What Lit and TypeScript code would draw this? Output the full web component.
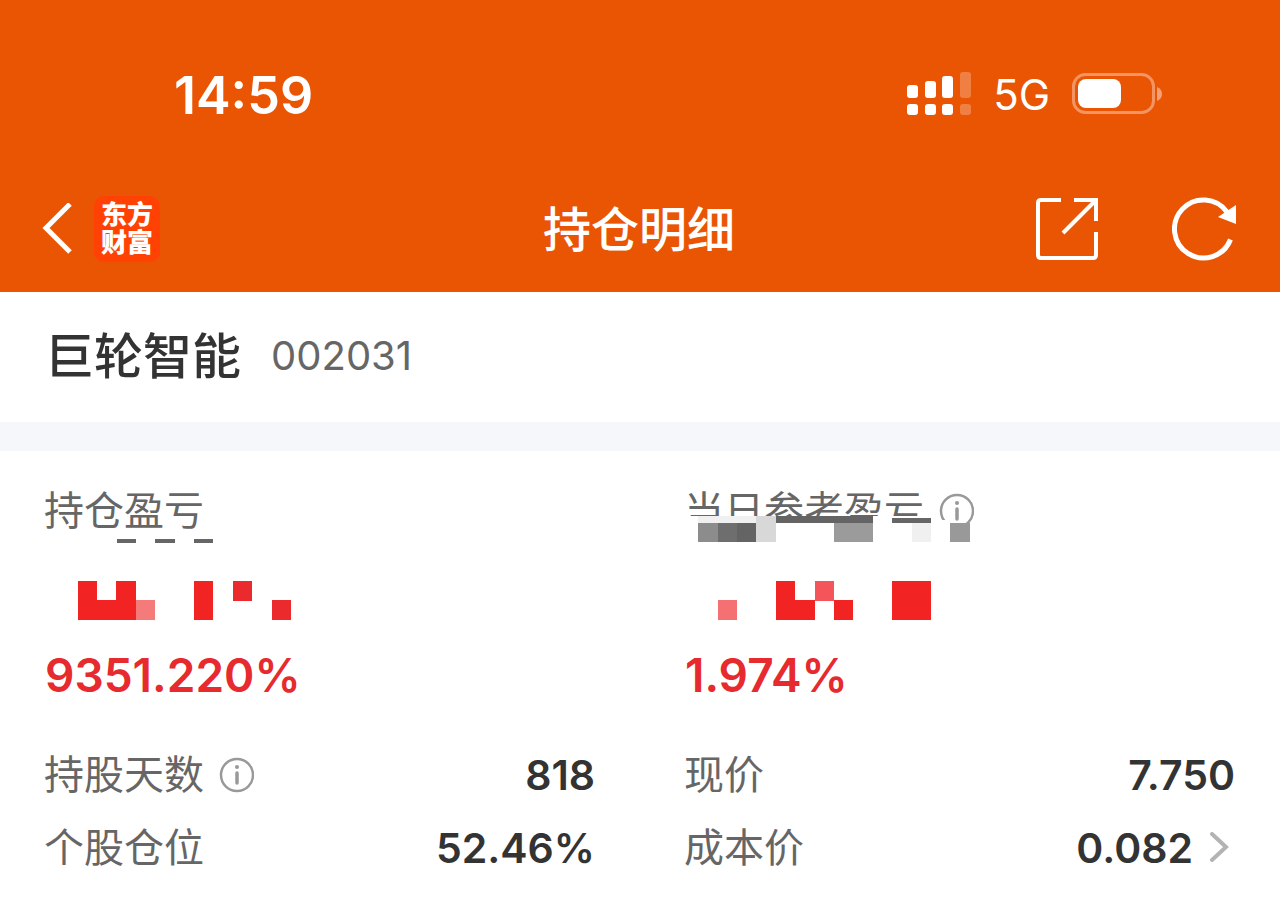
import { LitElement, html, css, svg } from "lit";
import { customElement } from "lit/decorators.js";

type Cell = [x: number, y: number, w: number, h: number, fill: string];

const PROFIT_MASK: Cell[] = [
  [72, 56, 19, 4, "#666"],
  [110, 56, 20, 4, "#666"],
  [149, 56, 19, 4, "#666"],
  [33, 98, 19, 39, "#f22323"],
  [52, 117, 20, 20, "#f22323"],
  [71, 98, 20, 39, "#f22323"],
  [91, 117, 19, 20, "#f57a7a"],
  [149, 98, 19, 39, "#f22323"],
  [188, 98, 19, 20, "#ea2a2c"],
  [227, 117, 19, 20, "#ea2a2c"],
];

const DAILY_MASK: Cell[] = [
  [0, 33, 252, 30, "#fff"],
  [252, 37, 13, 26, "#fff"],
  [13, 33, 58, 7, "#f0f0f0"],
  [13, 40, 20, 19, "#8c8c8c"],
  [33, 40, 19, 19, "#6e6e6e"],
  [52, 40, 19, 19, "#646464"],
  [71, 33, 20, 26, "#d8d8d8"],
  [91, 33, 97, 7, "#646464"],
  [149, 40, 39, 19, "#9b9b9b"],
  [207, 35, 39, 5, "#666"],
  [227, 40, 19, 19, "#f0f0f0"],
  [265, 40, 20, 19, "#999"],
  [33, 117, 19, 20, "#f57072"],
  [91, 98, 19, 39, "#f22323"],
  [110, 117, 20, 20, "#f22323"],
  [130, 98, 19, 20, "#f4555a"],
  [149, 117, 19, 20, "#f22323"],
  [207, 98, 39, 39, "#f22323"],
];

const infoIcon = html`<svg width="36" height="36" viewBox="0 0 36 36" aria-hidden="true">
  <circle cx="19" cy="18" r="16" fill="none" stroke="#999" stroke-width="2.500" />
  <circle cx="19" cy="10" r="2" fill="#999" />
  <path d="M19 16v10" stroke="#999" stroke-width="3.500" stroke-linecap="round" />
</svg>`;

const mask = (cells: Cell[]) => html`<svg class="mask" width="300" height="150" viewBox="0 0 300 150" shape-rendering="crispEdges" aria-hidden="true">
  ${cells.map(([x, y, w, h, fill]) => svg`<rect x=${x} y=${y} width=${w} height=${h} fill=${fill} />`)}
</svg>`;

@customElement("app-root")
export class AppRoot extends LitElement {
  static styles = css`
    :host {
      display: block;
      min-height: 100vh;
      background: #fff;
      color: #333;
      font-family: Inter, "Noto Sans CJK SC", sans-serif;
    }
    svg {
      display: block;
      flex: none;
    }
    button {
      padding: 0;
      border: 0;
      background: none;
      color: inherit;
      font: inherit;
      cursor: pointer;
    }
    .top {
      background: #ea5504;
      color: #fff;
    }
    .status {
      display: flex;
      align-items: center;
      justify-content: space-between;
      height: 142px;
      padding: 24px 118px 0 174px;
    }
    .time {
      font-size: 52px;
      font-weight: 600;
    }
    .signals {
      display: flex;
      align-items: center;
      gap: 22px;
      padding-bottom: 2px;
      font-size: 42px;
    }
    .nav {
      display: grid;
      grid-template-columns: 1fr auto 1fr;
      align-items: center;
      height: 126px;
      padding: 0 44px 0 42px;
    }
    .lead,
    .actions {
      display: flex;
      align-items: center;
    }
    .lead {
      gap: 22px;
    }
    .actions {
      justify-content: flex-end;
      gap: 74px;
    }
    .logo {
      width: 66px;
      padding: 5px 0;
      border-radius: 10px;
      background: #ff4203;
      font-size: 26px;
      font-weight: 900;
      line-height: 28px;
      text-align: center;
    }
    .title {
      margin: 0;
      padding-top: 2px;
      font-size: 48px;
      font-weight: 500;
      line-height: 64px;
    }
    .stock {
      display: flex;
      align-items: center;
      gap: 30px;
      height: 126px;
      padding: 0 45px 4px;
      border-bottom: 29px solid #f5f7fa;
    }
    .name {
      margin: 0;
      padding-top: 4px;
      font-size: 49px;
      font-weight: 500;
      line-height: 64px;
    }
    .code {
      color: #666;
      font-size: 40px;
    }
    .details {
      display: grid;
      grid-template-columns: 1fr 1fr;
      column-gap: 90px;
      padding: 32px 45px 12px;
    }
    .metric {
      position: relative;
      display: flex;
      flex-direction: column;
      justify-content: space-between;
      height: 220px;
      margin-bottom: 35px;
    }
    .mask {
      position: absolute;
      top: 0;
      left: 0;
    }
    .label {
      display: flex;
      align-items: center;
      gap: 14px;
      margin-left: -1px;
      color: #666;
      font-size: 40px;
      line-height: 56px;
    }
    .percent {
      color: #e62a2d;
      font-size: 46px;
      font-weight: 600;
      line-height: 56px;
    }
    .row {
      display: flex;
      align-items: center;
      justify-content: space-between;
      height: 73px;
    }
    .value {
      display: flex;
      align-items: center;
      gap: 16px;
      font-size: 41px;
      font-weight: 600;
    }
  `;

  render() {
    return html`
      <header class="top">
        <div class="status">
          <span class="time">14:59</span>
          <div class="signals">
            <svg width="64" height="44" viewBox="0 0 64 44" fill="#fff" aria-hidden="true">
              <rect x="0" y="13" width="11" height="13" rx="3" />
              <rect x="18" y="9" width="11" height="17" rx="3" />
              <rect x="35" y="4" width="11" height="22" rx="3" />
              <rect x="53" y="0" width="11" height="26" rx="3" opacity=".25" />
              <rect x="0" y="32" width="11" height="11" rx="3" />
              <rect x="18" y="32" width="11" height="11" rx="3" />
              <rect x="35" y="32" width="11" height="11" rx="3" />
              <rect x="53" y="32" width="11" height="11" rx="3" opacity=".25" />
            </svg>
            <span>5G</span>
            <svg width="90" height="42" viewBox="0 0 90 42" aria-hidden="true">
              <rect x="1.500" y="1.500" width="80" height="38" rx="12" fill="none" stroke="#fff" stroke-opacity=".38" stroke-width="3" />
              <rect x="6" y="6" width="43" height="29" rx="8" fill="#fff" />
              <path d="M85 14q5 2 5 7t-5 7z" fill="#fff" fill-opacity=".45" />
            </svg>
          </div>
        </div>
        <nav class="nav">
          <div class="lead">
            <button aria-label="返回">
              <svg width="30" height="52" viewBox="0 0 30 52" fill="none" stroke="#fff" stroke-width="5">
                <path d="M28 1 4 25l24 24" />
              </svg>
            </button>
            <div class="logo">东方<br />财富</div>
          </div>
          <h1 class="title">持仓明细</h1>
          <div class="actions">
            <button aria-label="分享">
              <svg width="62" height="62" viewBox="0 0 62 62" fill="none" stroke="#fff" stroke-width="4">
                <path d="M25 2H5Q2 2 2 5v52q0 3 3 3h52q3 0 3-3V34M38 2h22v21M59 3 27 35" />
              </svg>
            </button>
            <button aria-label="刷新">
              <svg width="64" height="64" viewBox="0 0 64 64" fill="none" stroke="#fff" stroke-width="5">
                <path d="M58.500 42.500A29 29 0 1 1 55 15" />
                <path d="M64 8v19l-18-7z" fill="#fff" stroke="none" />
              </svg>
            </button>
          </div>
        </nav>
      </header>
      <main>
        <section class="stock">
          <h2 class="name">巨轮智能</h2>
          <span class="code">002031</span>
        </section>
        <section class="details">
          <div class="metric">
            <div class="label">持仓盈亏</div>
            ${mask(PROFIT_MASK)}
            <div class="percent">9351.220%</div>
          </div>
          <div class="metric">
            <div class="label">
              当日参考盈亏
              <button aria-label="当日参考盈亏说明">${infoIcon}</button>
            </div>
            ${mask(DAILY_MASK)}
            <div class="percent">1.974%</div>
          </div>
          <div class="row">
            <div class="label">
              持股天数
              <button aria-label="持股天数说明">${infoIcon}</button>
            </div>
            <div class="value">818</div>
          </div>
          <div class="row">
            <div class="label">现价</div>
            <div class="value">7.750</div>
          </div>
          <div class="row">
            <div class="label">个股仓位</div>
            <div class="value">52.46%</div>
          </div>
          <div class="row">
            <div class="label">成本价</div>
            <div class="value">
              0.082
              <button aria-label="成本价详情">
                <svg width="26" height="32" viewBox="0 0 26 32" fill="none" stroke="#b3b3b3" stroke-width="4" stroke-linecap="round">
                  <path d="M3 2l14 13L3 28" />
                </svg>
              </button>
            </div>
          </div>
        </section>
      </main>
    `;
  }
}
